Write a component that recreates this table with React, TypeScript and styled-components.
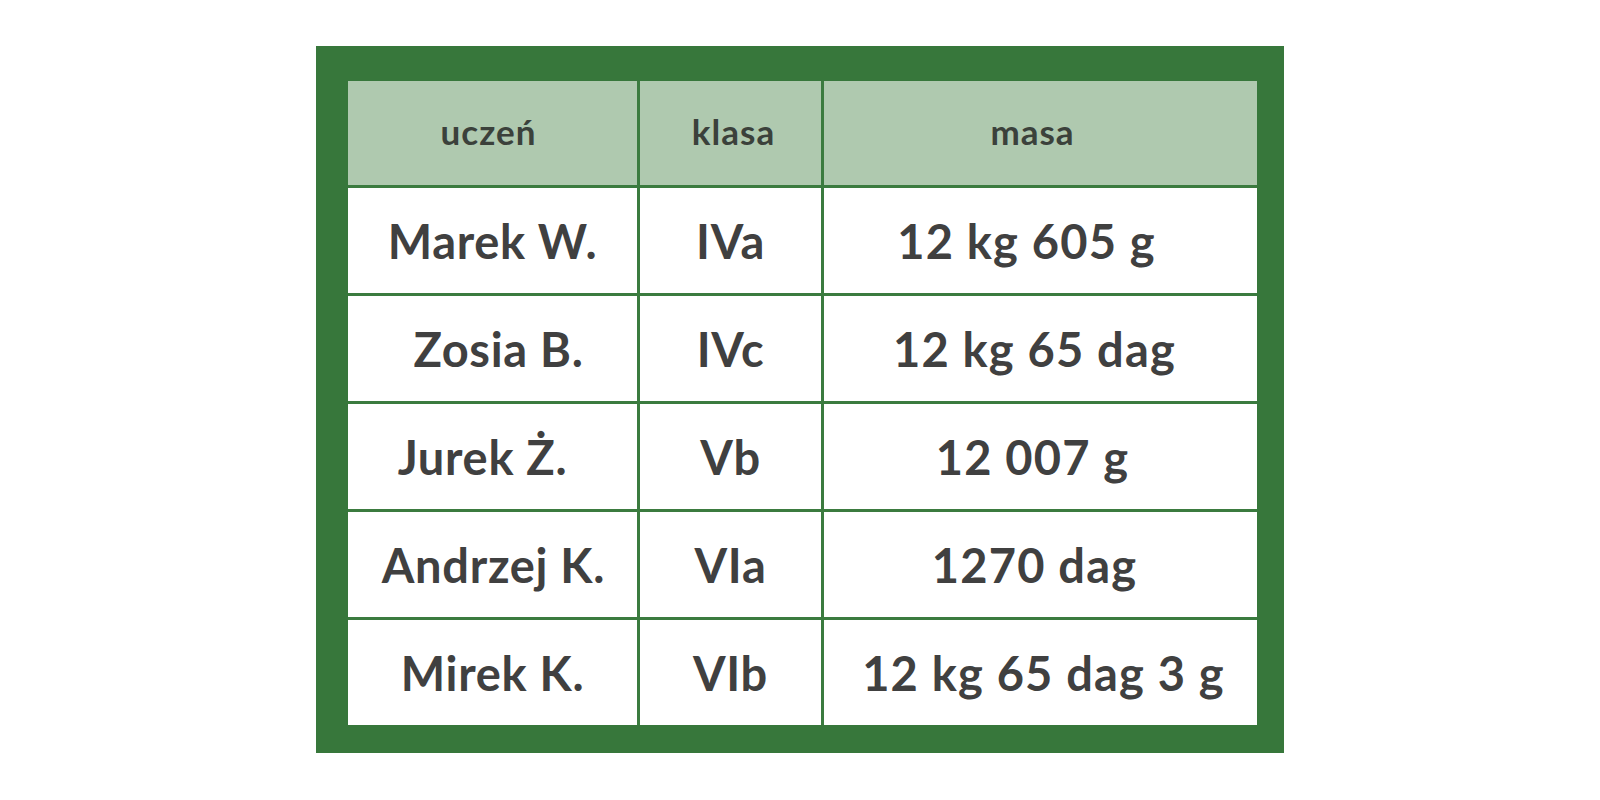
import React from 'react';
import styled, { createGlobalStyle } from 'styled-components';

const GlobalStyle = createGlobalStyle`
  html, body {
    margin: 0;
    padding: 0;
    background: #ffffff;
  }
  body {
    font-family: Lato, "Noto Sans", sans-serif;
  }
`;

const Page = styled.div`
  width: 1600px;
  height: 800px;
  display: flex;
  justify-content: center;
  align-items: flex-start;
  padding-top: 46px;
  box-sizing: border-box;
`;

const Frame = styled.div`
  background: #37773b;
  padding: 35px 27px 28px 32px;
`;

const Grid = styled.div`
  display: grid;
  grid-template-columns: 289px 181px 433px;
  grid-template-rows: 104px repeat(5, 105px);
  gap: 3px;
  background: #3b7b3f;
`;

// $dx moves the centred text sideways, as the hand-set cells of the original do
const HeadCell = styled.div<{ $dx?: number }>`
  background: #afc9af;
  color: #3b413b;
  display: flex;
  align-items: center;
  justify-content: center;
  font-family: Lato, sans-serif;
  font-weight: 700;
  font-size: 35px;
  letter-spacing: 1px;
  padding-bottom: 4px;
  padding-left: ${p => Math.max(0, (p.$dx ?? 0) * 2)}px;
  padding-right: ${p => Math.max(0, -(p.$dx ?? 0) * 2)}px;
  box-sizing: border-box;
`;

const Cell = styled.div<{ $dx?: number; $wide?: boolean }>`
  background: #ffffff;
  color: #404040;
  display: flex;
  align-items: center;
  justify-content: center;
  font-family: Lato, sans-serif;
  font-weight: 700;
  font-size: 47px;
  letter-spacing: ${p => (p.$wide ? 1.2 : 0.7)}px;
  padding-left: ${p => Math.max(0, (p.$dx ?? 0) * 2)}px;
  padding-right: ${p => Math.max(0, -(p.$dx ?? 0) * 2)}px;
  box-sizing: border-box;
`;

const headers = [
  { label: 'uczeń', dx: -4 },
  { label: 'klasa', dx: 3 },
  { label: 'masa', dx: -8 },
];

const rows: { name: string; klasa: string; masa: string; nameDx: number; masaDx: number }[] = [
  { name: 'Marek W.', klasa: 'IVa', masa: '12 kg 605 g', nameDx: 0, masaDx: -14 },
  { name: 'Zosia B.', klasa: 'IVc', masa: '12 kg 65 dag', nameDx: 6, masaDx: -6 },
  { name: 'Jurek Ż.', klasa: 'Vb', masa: '12 007 g', nameDx: -10, masaDx: -8 },
  { name: 'Andrzej K.', klasa: 'VIa', masa: '1270 dag', nameDx: 1, masaDx: -6 },
  { name: 'Mirek K.', klasa: 'VIb', masa: '12 kg 65 dag 3 g', nameDx: 0, masaDx: 3 },
];

export default function App() {
  return (
    <>
      <GlobalStyle />
      <Page>
        <Frame>
          <Grid>
            {headers.map(h => (
              <HeadCell key={h.label} $dx={h.dx}>{h.label}</HeadCell>
            ))}
            {rows.map(r => (
              <React.Fragment key={r.name}>
                <Cell $dx={r.nameDx}>{r.name}</Cell>
                <Cell>{r.klasa}</Cell>
                <Cell $dx={r.masaDx} $wide>{r.masa}</Cell>
              </React.Fragment>
            ))}
          </Grid>
        </Frame>
      </Page>
    </>
  );
}
